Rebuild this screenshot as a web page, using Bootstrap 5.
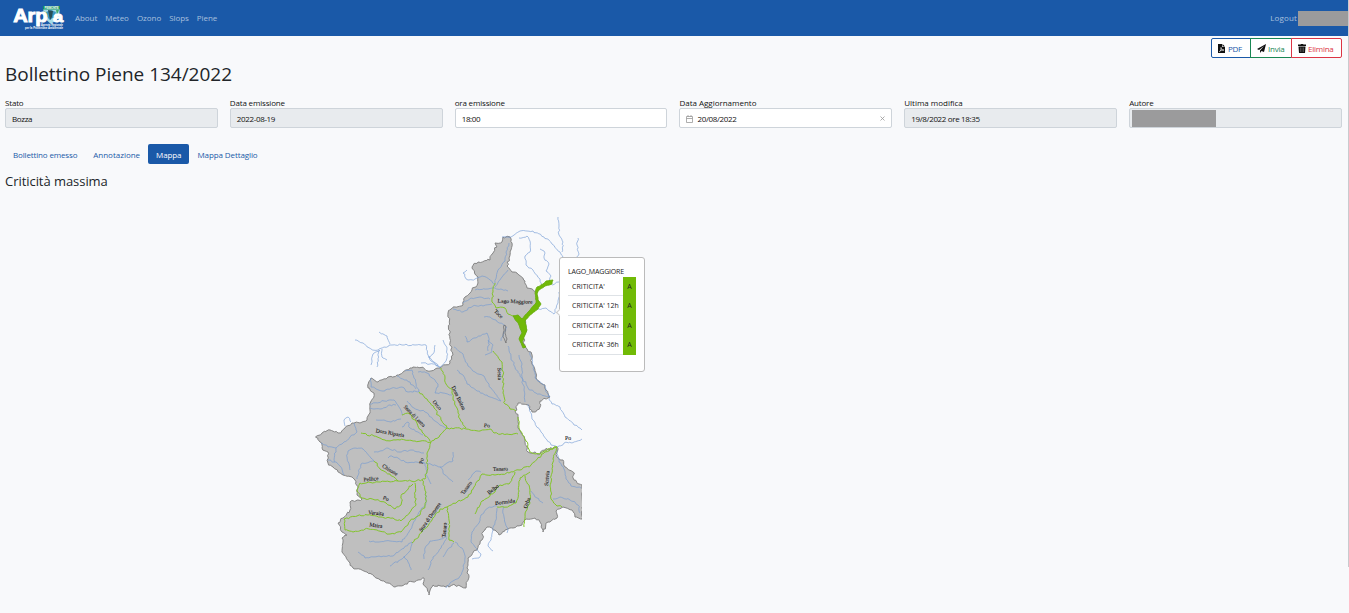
<!DOCTYPE html>
<html lang="it">
<head>
<meta charset="utf-8">
<title>Bollettino Piene 134/2022</title>
<meta name="viewport" content="width=device-width, initial-scale=1">
<link href="https://cdn.jsdelivr.net/npm/bootstrap@5.3.0/dist/css/bootstrap.min.css" rel="stylesheet">
<style>
  :root { --arpa: #1a59a8; }
  html { overflow: hidden; }
  body { font-family: "Open Sans", "Noto Sans", sans-serif; font-size: 8px; line-height: 12px; background: #f8f9fb; color: #212529; height: 613px; overflow: hidden; letter-spacing: -.17px; }
  .page { width: 1348px; }
  .rail { width: 1px; height: 567px; background: #c9cbce; }
  .topbar { background: var(--arpa); height: 36px; padding: 0 0 0 12px; }
  .topbar .nav-link { color: rgba(255,255,255,.62); padding: 0 4px; letter-spacing: -.05px; }
  .redacted { background: #9b9b9c; }
  .actions .btn { font-size: 8px; line-height: 12px; padding: 4px 6px 3px; height: 20px; border-radius: 2px; background: #fff; letter-spacing: -.25px; }
  .btn-arpa { --bs-btn-color: var(--arpa); --bs-btn-border-color: var(--arpa); }
  h1 { font-size: 19px; line-height: 24px; font-weight: 400; margin: 4px 0 12px; letter-spacing: -.02px; }
  h2 { font-size: 13px; line-height: 16px; font-weight: 400; margin: 0; letter-spacing: -.05px; }
  .fields { --bs-gutter-x: 12px; }
  .fields label { display: block; line-height: 10px; margin-bottom: 0; color: #111; }
  .fields .wide { letter-spacing: -.02px; }
  .fields .form-control { font-size: 8px; height: 20px; min-height: 0; padding: 1px 6px 0; line-height: 18px; border-radius: 2px; border-color: #ced4da; color: #111; letter-spacing: -.35px; }
  .fields .locked { background: #e8ebee; }
  .tabs .nav-link { font-size: 8px; line-height: 12px; padding: 5px 8px 3px; height: 20px; border-radius: 2px; color: var(--arpa); letter-spacing: -.1px; }
  .tabs .nav-link.active { background: var(--arpa); color: #fff; }
  .mapbox { margin: 21px 0 0 310px; width: 350px; height: 390px; }
  .mapbox text { font-family: "Liberation Serif", serif; font-size: 5.5px; fill: #111; stroke: #111; stroke-width: .08; text-anchor: middle; letter-spacing: 0; }
  .tip { left: 249px; top: 47px; width: 86px; height: 115px; border: 1px solid #bbb; border-radius: 3px; background: #fff; padding: 8px 8px 0; font-size: 7px; color: #222; white-space: nowrap; }
  .tip::before { content: ""; position: absolute; left: -3.5px; top: 52px; width: 5px; height: 5px; background: #fff; border: 1px solid #ccc; border-width: 0 0 1px 1px; transform: rotate(45deg); }
  .tip-head { line-height: 11px; }
  .tip-row { width: 68px; height: 19.4px; border-bottom: 1px solid #dee2e6; line-height: 19px; padding-left: 4px; letter-spacing: 0; }
  .tip-level { width: 13px; background: #71ba06; margin-bottom: -1px; text-align: center; }
</style>
</head>
<body>
<div class="d-flex align-items-start">
<div class="page flex-shrink-0">
  <nav class="topbar d-flex align-items-center">
    <svg width="54" height="28" viewBox="12 4 54 28" class="flex-shrink-0" style="margin-right:5px" aria-label="Arpa">
      <path d="M43 6h17l-1 12-8 6-7-6z" fill="#a5dbe6"/>
      <path d="M43 6h17v3.500H43z" fill="#12905c"/>
      <path d="M46 12l5-2 5 2-2 5-4 3-4-4z" fill="#3a96c5"/><path d="M48 10l5 1-1 6-2 3z" fill="#264f58"/><path d="M44 11l3 2 1 4-3-1zM56 10l3 0-2 5z" fill="#42ab70"/>
      <text x="51.500" y="8.600" font-size="2.600" font-family="Liberation Sans" font-weight="700" fill="#fff" text-anchor="middle" textLength="14" lengthAdjust="spacingAndGlyphs">PIEMONTE</text>
      <g font-family="Liberation Sans" font-weight="700" fill="#fff" stroke="#fff" stroke-width=".9">
        <text x="13.300" y="22" font-size="18" textLength="34" lengthAdjust="spacingAndGlyphs">Arp</text>
        <text x="53" y="22" font-size="15.500" textLength="10" lengthAdjust="spacingAndGlyphs">a</text>
      </g>
      <g font-family="Liberation Sans" font-weight="700" fill="#fff" letter-spacing="0">
        <text x="41" y="25.800" font-size="2.800" textLength="22" lengthAdjust="spacingAndGlyphs">Agenzia Regionale</text>
        <text x="25" y="29.200" font-size="3" textLength="38" lengthAdjust="spacingAndGlyphs">per la Protezione Ambientale</text>
      </g>
    </svg>
    <div class="nav flex-nowrap">
      <a class="nav-link" href="#">About</a><a class="nav-link" href="#">Meteo</a><a class="nav-link" href="#">Ozono</a><a class="nav-link" href="#">Slops</a><a class="nav-link" href="#">Piene</a>
    </div>
    <a class="nav-link ms-auto p-0" href="#" style="letter-spacing:.15px">Logout</a>
    <span class="redacted" style="width:50px;height:15px;margin-left:1px"></span>
  </nav>

  <main style="padding:2px 6px 0 5px">
    <div class="actions btn-group d-flex justify-content-end">
      <button class="btn btn-arpa flex-grow-0 d-flex align-items-center" style="width:40px;gap:3px">
        <svg width="7" height="9" viewBox="0 0 14 18" class="flex-shrink-0"><path d="M0 0h8v6h6v12H0zM9 0l5 5H9z" fill="#111"/><path d="M3 15c2-1 4-5 3-8 0 4 3 6 6 5-4 0-7 1-9 3" fill="none" stroke="#fff" stroke-width="1.300"/></svg>PDF</button>
      <button class="btn btn-outline-success flex-grow-0 d-flex align-items-center" style="width:42px;gap:2px">
        <svg width="9" height="9" viewBox="0 0 18 18" class="flex-shrink-0"><path d="M18 0L0 10l4 2L14 4 6 13v5l3-4 5 2z" fill="#111"/></svg>Invia</button>
      <button class="btn btn-outline-danger flex-grow-0 d-flex align-items-center" style="width:51px;gap:2px">
        <svg width="8" height="9" viewBox="0 0 16 18" class="flex-shrink-0"><path d="M0 1h5l1-1h4l1 1h5v3H0zM1 5h14l-1 13H2z" fill="#111"/><path d="M5 7v9M8 7v9M11 7v9" stroke="#888" stroke-width="1"/></svg>Elimina</button>
    </div>
    <h1>Bollettino Piene 134/2022</h1>
    <div class="row fields">
      <div class="col-2"><label>Stato</label><div class="form-control locked">Bozza</div></div>
      <div class="col-2"><label>Data emissione</label><div class="form-control locked">2022-08-19</div></div>
      <div class="col-2"><label>ora emissione</label><div class="form-control">18:00</div></div>
      <div class="col-2"><label class="wide">Data Aggiornamento</label>
        <div class="form-control d-flex align-items-center">
          <svg width="7" height="8" viewBox="0 0 7 8" class="me-1" fill="none" stroke="#999" stroke-width=".8"><path d="M.5 1.500h6v6h-6zM.5 3.500h6M2 0v2M5 0v2"/></svg>20/08/2022
          <svg width="5" height="5" viewBox="0 0 5 5" class="ms-auto" stroke="#999" stroke-width=".8"><path d="M.5.500l4 4M4.500.500l-4 4"/></svg>
        </div></div>
      <div class="col-2"><label class="wide">Ultima modifica</label><div class="form-control locked">19/8/2022 ore 18:35</div></div>
      <div class="col-2"><label>Autore</label><div class="form-control locked p-0"><div class="redacted" style="width:84px;height:17px;margin:1px 0 0 2px"></div></div></div>
    </div>
    <div class="nav tabs flex-nowrap" style="margin-top:16px">
      <a class="nav-link" href="#" style="letter-spacing:-.15px">Bollettino emesso</a><a class="nav-link" href="#" style="letter-spacing:-.02px">Annotazione</a><a class="nav-link active" href="#">Mappa</a><a class="nav-link" href="#">Mappa Dettaglio</a>
    </div>
    <h2 style="margin-top:9px">Criticità massima</h2>
  </main>

  <div class="mapbox position-relative">
    <svg id="map" class="d-block" width="272" height="390" viewBox="310 210 272 390">
      <g id="shapes"></g>
      <g id="names"></g>
    </svg>
    <div class="tip position-absolute">
      <div class="tip-head">LAGO_MAGGIORE</div>
      <div class="tip-row d-flex justify-content-between">CRITICITA'<span class="tip-level">A</span></div>
      <div class="tip-row d-flex justify-content-between">CRITICITA' 12h<span class="tip-level">A</span></div>
      <div class="tip-row d-flex justify-content-between">CRITICITA' 24h<span class="tip-level">A</span></div>
      <div class="tip-row d-flex justify-content-between">CRITICITA' 36h<span class="tip-level">A</span></div>
    </div>
  </div>
</div>
<div class="rail"></div>
</div>
<script src="https://cdn.jsdelivr.net/npm/bootstrap@5.3.0/dist/js/bootstrap.bundle.min.js"></script>
<script>
  // Small seeded generator: gives borders and rivers the same ragged course on every load
  let seed = 7;
  const rnd = () => (seed = (seed * 16807) % 2147483647) / 2147483647 - .5;
  const NS = 'http://www.w3.org/2000/svg';
  const shapes = document.getElementById('shapes'), names = document.getElementById('names');

  function ragged(str, amp, closed) {
    const p = str.trim().split(/\s+/).map(s => s.split(',').map(Number));
    if (closed) p.push(p[0]);
    let d = 'M' + p[0];
    for (let i = 1; i < p.length; i++) {
      const [x0, y0] = p[i - 1], [x1, y1] = p[i];
      const n = Math.max(1, Math.round(Math.hypot(x1 - x0, y1 - y0) / 2.2));
      for (let k = 1; k < n; k++)
        d += 'L' + (x0 + (x1 - x0) * k / n + rnd() * amp).toFixed(1) + ',' + (y0 + (y1 - y0) * k / n + rnd() * amp).toFixed(1);
      d += 'L' + x1 + ',' + y1;
    }
    return d + (closed ? 'Z' : '');
  }
  function draw(str, amp, closed, attrs) {
    const e = document.createElementNS(NS, 'path');
    e.setAttribute('d', ragged(str, amp, closed));
    for (const k in attrs) e.setAttribute(k, attrs[k]);
    shapes.appendChild(e);
  }

  // Regional border
  draw(`503,237 510,237 512,243 509,258 507,266 512,272 517,273 525,281 527,288 536,292 538,301 530,312 525,320 526,332
    523,343 527,349 531,352 532,363 535,371 536,378 545,385 550,397 540,401 541,405 537,410 532,412 528,405 518,403 515,411
    518,417 518,428 525,440 528,452 540,454 545,450 557,447 557,457 563,460 565,467 573,472 574,480 582,485 582,519 575,517
    572,510 563,507 556,511 557,518 548,522 543,532 540,522 535,518 526,519 522,525 513,528 505,530 499,535 495,530 487,527
    483,532 482,540 477,550 468,558 467,568 469,577 466,588 462,587 455,585 445,587 433,585 431,588 429,595 427,588 423,584
    424,578 418,580 405,584 395,587 388,583 380,580 367,572 353,568 350,563 342,552 342,538 347,535 342,532 338,523
    343,518 350,510 350,502 358,500 362,499 357,495 358,488 355,480 352,477 343,475 333,467 328,463 328,452 322,448
    320,442 315.5,437 322,433 330,430 338,433 345,428 352,423 360,423 367,420 370,413 370,406 374,393 368,388 371,378
    378,382 388,377 397,375 410,368 418,367 430,371 440,368 450,363 453,355 450,343 450,333 448,313 453,307 463,305
    465,297 472,290 478,283 478,277 472,267 478,262 490,260 493,253 497,247 495,243 502,242`, 2.3, true,
    { fill: '#bfbfbf', stroke: '#858585', 'stroke-width': 1 });

  // Rivers outside the monitored network
  [ '502,237 511,237 520,231 533,231 544,237 552,244 560,252 563,259',
    '558,217 559,226 559,235 563,242 562,252',
    '578,238 577,245 579,254 576,260',
    '519,238 527,236 530,241 530,252 525,256 526,265 533,270 540,279 542,285',
    '540,249 545,253 544,258 549,264 546,271 551,276 550,282',
    '552,285 559,282', '538,309 546,308 554,314 558,303 560,291',
    '467,270 463,273 468,280 475,279 482,276 490,280 495,285',
    '509,243 506,252 505,261 498,270 495,283', '508,270 502,277 495,287',
    '475,290 488,289 495,288 501,289 508,291',
    '463,303 471,298 480,297 490,299', '453,309 463,312 473,306 483,306 492,304',
    '484,317 490,317 496,320 504,325 507,328',
    '465,336 467,342 474,338 487,333 489,340 488,351',
    '506,328 503,336 501,341', '508,346 511,357 515,367 522,378 524,390 525,402',
    '519,355 522,364 522,377 528,388 536,393 550,397',
    '530,352 533,365 535,378 544,385 549,397',
    '454,347 463,354 468,366 475,372 484,376 491,388 501,401',
    '457,370 463,375 467,384 477,391 490,397 501,401',
    '485,355 492,352 493,345 488,340',
    '355,340 363,343 371,349 378,350 384,347 392,345 402,345 415,345 426,345 428,355 431,361 440,368',
    '379,332 387,336 390,344', '380,350 373,354 371,365', '379,350 377,367', '382,349 382,357 387,360',
    '435,345 433,354 428,357', '443,340 447,349 447,356 446,361 440,367', '429,357 434,362 440,367', '421,363 430,364 438,366',
    '371,378 371,387 382,391 392,388 402,387 408,392 419,391',
    '405,371 412,370 414,378 419,392', '397,376 410,382 416,389',
    '418,372 427,373 435,380 438,384 435,393 443,393 452,395',
    '370,404 384,401 394,400 399,407 402,415', '376,420 384,420 391,422 401,419',
    '370,408 380,409 390,405 396,405', '407,401 414,408 425,412 435,421 446,428',
    '402,427 408,422 410,428 418,432 423,435',
    '345,426 344,420 348,417 351,422', '354,423 357,432 350,437 342,444 336,448 328,447 321,443',
    '336,448 334,460 340,466 344,475', '335,462 328,460',
    '350,470 347,457 348,451 355,448 363,449 374,461',
    '374,461 361,464 357,479',
    '374,452 380,451 388,448 399,452 411,450 424,453',
    '388,458 390,456 398,458 405,462 425,463',
    '426,463 437,466 442,467 447,463 453,461 453,452', '440,467 445,475 453,482', '425,463 427,476 431,484',
    '426,492 426,503 416,518 409,532 402,542 390,541 379,542 369,541',
    '358,552 365,558 379,556 393,556 402,549 412,542', '412,542 409,552 404,557 390,566',
    '404,556 408,562 411,570', '424,559 425,548 430,541 447,537',
    '447,538 441,548 433,557 428,570', '454,543 448,549 443,557',
    '455,542 462,548 465,558 463,570 459,578 450,583 446,588',
    '497,506 488,508 481,515 479,523 472,532 471,542 475,547 481,554 479,558 472,559',
    '497,508 496,520 493,530 491,540 488,546 493,551', '503,506 504,517 508,530 507,533',
    '468,480 472,475 476,471 481,472', '531,491 537,498 543,503',
    '557,450 559,462 564,469 566,479 571,486 581,488', '553,499 560,497 570,500 578,505 580,513',
    '528,404 532,419 541,432 551,445 557,447', '549,398 552,404 560,407 565,417 574,425 582,430',
    '557,447 564,443 572,443 582,439'
  ].forEach(r => draw(r, 1.7, false, { fill: 'none', stroke: '#6f98d2', 'stroke-width': .85, 'stroke-opacity': .72 }));

  // Monitored rivers
  [ '495,283 493,292 492,302 496,308 505,308 508,314 514,316',
    '493,351 502,362 503,375 503,393 505,404 510,409 516,411',
    '441,368 445,378 446,384 452,389 453,398 457,408 460,419 466,428',
    '419,392 427,399 434,408 441,420 447,428', '402,415 408,413 416,421 422,432 430,441',
    '361,433 374,436 385,440 400,440 415,441 431,442',
    '430,443 440,435 447,428 466,429 480,431 490,429 494,433 507,434 518,434',
    '518,417 519,428 526,441 530,452 540,454 547,450 557,447',
    '431,442 427,454 427,471 425,479 416,481 398,481',
    '374,461 380,469 390,474 398,481',
    '398,481 379,482 360,483 357,491 362,498 375,500 386,503 395,509 401,505 402,494 413,484',
    '415,483 415,495 416,504 410,512 401,521 393,518 381,517 368,515 357,516 344,519 345,530 353,532 365,529 377,530 390,534 401,532 410,521 420,515 425,505 426,492 422,480',
    '412,543 422,532 432,520 440,509 447,507 457,502 468,497 474,487 482,474 495,475 509,473 520,470 531,465 545,452 557,447',
    '447,507 449,520 449,540 454,542', '475,514 482,501 495,492 500,485 509,484 515,472',
    '497,507 509,506 516,503 519,491 520,478 530,472', '525,476 530,490 530,503 525,514 524,527',
    '557,447 553,459 552,473 550,486 551,499 557,506 562,507'
  ].forEach(r => draw(r, 1.9, false, { fill: 'none', stroke: '#83c42a', 'stroke-width': 1 }));

  // Small lake
  draw('504,325 503,337 506,343 507,339 505,333 506,326', 1, true, { fill: 'none', stroke: '#666', 'stroke-width': .7 });
  // Lago Maggiore
  draw(`546,281 553,280 552,284 545,286 539,290 537,294 538,300 541,304 538,309 530,315 525,321 527,330 524,337 522,342
    526,347 523,348 519,339 522,333 519,325 513,316 518,315 522,319 530,310 536,303 535,293 537,287 543,284`, .8, true,
    { fill: '#71b908', stroke: '#68ad10', 'stroke-width': .9 });

  // name, centre x, centre y, rotation, drawn length
  [ ['Lago Maggiore',515,301.500,2,35], ['Toce',498.500,314,45,10], ['Sesia',499.500,374,88,12], ['Dora Baltea',458.500,398,65,26],
    ['Orco',437,405,50,11], ['Stura di Lanzo',414.500,416,45,28], ['Dora Riparia',390,433,10,29], ['Po',487,425.500,5,6],
    ['Po',568,438.500,0,6], ['Po',421.500,461,-80,6], ['Chisone',390,470,31,17], ['Pellice',371,479,-6,15], ['Po',386,498.500,20,6],
    ['Varaita',376,513,5,16], ['Maira',376,525.500,8,13], ['Stura di Demonte',430,517,-55,34], ['Tanaro',444.500,530,-85,15],
    ['Tanaro',466.500,488,-55,15], ['Tanaro',500.500,469,-2,15], ['Belbo',493,489.500,-38,13], ['Bormida',505,502,-8,20],
    ['Orba',527,503,-70,11], ['Scrivia',547,478.500,-85,15]
  ].forEach(([n, x, y, a, w]) => {
    const t = document.createElementNS(NS, 'text');
    t.setAttribute('transform', `translate(${x} ${y}) rotate(${a})`);
    t.setAttribute('y', 1.700);
    t.setAttribute('textLength', w);
    t.setAttribute('lengthAdjust', 'spacingAndGlyphs');
    t.textContent = n;
    names.appendChild(t);
  });
</script>
</body>
</html>
